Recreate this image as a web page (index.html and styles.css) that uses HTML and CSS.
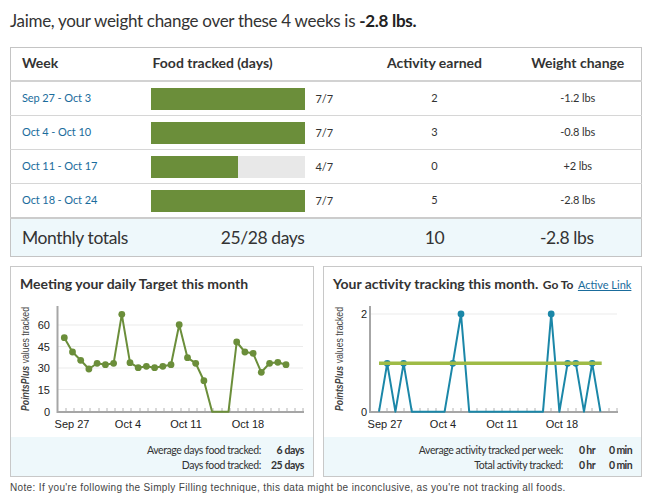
FILE: index.html
```html
<!DOCTYPE html>
<html>
<head>
<meta charset="utf-8">
<link rel="stylesheet" href="styles.css">
</head>
<body>
<div class="page">
  <h1 class="headline">Jaime, your weight change over these 4 weeks is <strong>-2.8 lbs.</strong></h1>

  <table class="weeks">
    <colgroup><col class="w-week"><col class="w-food"><col class="w-act"><col></colgroup>
    <thead>
      <tr><th class="c-week">Week</th><th class="c-food">Food tracked (days)</th><th class="c-act">Activity earned</th><th class="c-wt">Weight change</th></tr>
    </thead>
    <tbody>
      <tr><td class="c-week"><a href="#">Sep 27 - Oct 3</a></td><td class="c-food"><div class="food"><div class="bar"><div class="fill" style="width:100%"></div></div><span>7/7</span></div></td><td class="c-act">2</td><td class="c-wt">-1.2 lbs</td></tr>
      <tr><td class="c-week"><a href="#">Oct 4 - Oct 10</a></td><td class="c-food"><div class="food"><div class="bar"><div class="fill" style="width:100%"></div></div><span>7/7</span></div></td><td class="c-act">3</td><td class="c-wt">-0.8 lbs</td></tr>
      <tr><td class="c-week"><a href="#">Oct 11 - Oct 17</a></td><td class="c-food"><div class="food"><div class="bar"><div class="fill" style="width:57.14%"></div></div><span>4/7</span></div></td><td class="c-act">0</td><td class="c-wt">+2 lbs</td></tr>
      <tr><td class="c-week"><a href="#">Oct 18 - Oct 24</a></td><td class="c-food"><div class="food"><div class="bar"><div class="fill" style="width:100%"></div></div><span>7/7</span></div></td><td class="c-act">5</td><td class="c-wt">-2.8 lbs</td></tr>
    </tbody>
    <tfoot>
      <tr><td class="c-week">Monthly totals</td><td class="c-food"><div class="total-days">25/28 days</div></td><td class="c-act">10</td><td class="c-wt">-2.8 lbs</td></tr>
    </tfoot>
  </table>

  <div class="panels">
    <section class="panel panel-food">
      <h2 class="panel-title">Meeting your daily Target this month</h2>
      <svg class="chart" width="302" height="144" viewBox="0 0 302 144">
        <g class="grid">
          <line x1="47" y1="32" x2="292" y2="32"/>
          <line x1="47" y1="53.5" x2="292" y2="53.5"/>
          <line x1="47" y1="75" x2="292" y2="75"/>
          <line x1="47" y1="96.5" x2="292" y2="96.5"/>
        </g>
        <g class="ticks">
          <path d="M55 115V119M63 115V119M71 115V119M79 115V119M88 115V119M96 115V119M104 115V119M112 115V119M120 115V119M129 115V119M137 115V119M145 115V119M153 115V119M161 115V119M170 115V119M178 115V119M186 115V119M194 115V119M202 115V119M211 115V119M219 115V119M227 115V119M235 115V119M243 115V119M252 115V119M260 115V119M268 115V119M276 115V119M284 115V119M292 115V119"/>
        </g>
        <line class="axis" x1="46.5" y1="13" x2="46.5" y2="120"/>
        <line class="axis" x1="46" y1="119" x2="293" y2="119"/>
        <g class="ylab">
          <text x="39" y="36">60</text>
          <text x="39" y="57.5">45</text>
          <text x="39" y="79">30</text>
          <text x="39" y="100.5">15</text>
          <text x="39" y="123">0</text>
        </g>
        <g class="xlab">
          <text x="61" y="135">Sep 27</text>
          <text x="117" y="135">Oct 4</text>
          <text x="175" y="135">Oct 11</text>
          <text x="237" y="135">Oct 18</text>
        </g>
        <text class="ytitle" transform="translate(18,66) rotate(-90)" textLength="104" lengthAdjust="spacingAndGlyphs"><tspan class="brand">PointsPlus</tspan> values tracked</text>
        <polyline class="line-green" points="53.3,44.7 61.5,59 69.7,67.3 77.9,76 86.1,70.3 94.4,71.7 102.6,70.3 110.8,21.3 119,69.7 127.2,74.7 135.4,73.3 143.6,74.7 151.8,73.3 160,71.7 168.2,31.7 176.5,64.7 184.7,70.3 192.9,87.7 201.1,118.7 209.3,118.7 217.5,118.7 225.7,49 233.9,59 242.1,60.3 250.3,79.3 258.6,70.3 266.8,69.3 275,71.7"/>
        <g class="dots-green">
          <circle cx="53.3" cy="44.7" r="3.4"/><circle cx="61.5" cy="59" r="3.4"/><circle cx="69.7" cy="67.3" r="3.4"/><circle cx="77.9" cy="76" r="3.4"/><circle cx="86.1" cy="70.3" r="3.4"/><circle cx="94.4" cy="71.7" r="3.4"/><circle cx="102.6" cy="70.3" r="3.4"/><circle cx="110.8" cy="21.3" r="3.4"/><circle cx="119" cy="69.7" r="3.4"/><circle cx="127.2" cy="74.7" r="3.4"/><circle cx="135.4" cy="73.3" r="3.4"/><circle cx="143.6" cy="74.7" r="3.4"/><circle cx="151.8" cy="73.3" r="3.4"/><circle cx="160" cy="71.7" r="3.4"/><circle cx="168.2" cy="31.7" r="3.4"/><circle cx="176.5" cy="64.7" r="3.4"/><circle cx="184.7" cy="70.3" r="3.4"/><circle cx="192.9" cy="87.7" r="3.4"/><circle cx="225.7" cy="49" r="3.4"/><circle cx="233.9" cy="59" r="3.4"/><circle cx="242.1" cy="60.3" r="3.4"/><circle cx="250.3" cy="79.3" r="3.4"/><circle cx="258.6" cy="70.3" r="3.4"/><circle cx="266.8" cy="69.3" r="3.4"/><circle cx="275" cy="71.7" r="3.4"/>
        </g>
      </svg>
      <div class="stats stats-food">
        <span class="lbl">Average days food tracked:</span><b>6 days</b>
        <span class="lbl">Days food tracked:</span><b>25 days</b>
      </div>
    </section>

    <section class="panel panel-act">
      <h2 class="panel-title">Your activity tracking this month. <span class="goto">Go To</span> <a href="#" class="active-link">Active Link</a></h2>
      <svg class="chart" width="317" height="144" viewBox="0 0 317 144">
        <g class="grid">
          <line x1="47" y1="21" x2="293" y2="21"/>
        </g>
        <g class="ticks">
          <path d="M55 115V119M63 115V119M71 115V119M80 115V119M88 115V119M96 115V119M104 115V119M112 115V119M121 115V119M129 115V119M137 115V119M145 115V119M153 115V119M162 115V119M170 115V119M178 115V119M186 115V119M194 115V119M203 115V119M211 115V119M219 115V119M227 115V119M235 115V119M244 115V119M252 115V119M260 115V119M268 115V119M276 115V119M285 115V119M293 115V119"/>
        </g>
        <line class="axis" x1="46" y1="13" x2="46" y2="120"/>
        <line class="axis" x1="45.5" y1="119" x2="294" y2="119"/>
        <g class="ylab">
          <text x="43" y="25">2</text>
          <text x="43" y="123">0</text>
        </g>
        <g class="xlab">
          <text x="61" y="135">Sep 27</text>
          <text x="119" y="135">Oct 4</text>
          <text x="178" y="135">Oct 11</text>
          <text x="238" y="135">Oct 18</text>
        </g>
        <text class="ytitle" transform="translate(19,66) rotate(-90)" textLength="104" lengthAdjust="spacingAndGlyphs"><tspan class="brand">PointsPlus</tspan> values tracked</text>
        <polyline class="line-blue" points="55,118.7 63.2,70.3 71.4,118.7 79.6,70.3 87.8,118.7 96,118.7 104.2,118.7 112.4,118.7 120.6,118.7 128.8,70.3 137,21 145.2,118.7 153.4,118.7 161.6,118.7 169.8,118.7 178,118.7 186.2,118.7 194.4,118.7 202.6,118.7 210.8,118.7 219,118.7 227.2,21 235.4,118.7 243.6,70.3 251.8,70.3 260,118.7 268.2,70.3 276.4,118.7"/>
        <g class="dots-blue">
          <circle cx="63.2" cy="70.3" r="3.4"/><circle cx="79.6" cy="70.3" r="3.4"/><circle cx="128.8" cy="70.3" r="3.4"/><circle cx="137" cy="21" r="3.4"/><circle cx="227.2" cy="21" r="3.4"/><circle cx="243.6" cy="70.3" r="3.4"/><circle cx="251.8" cy="70.3" r="3.4"/><circle cx="268.2" cy="70.3" r="3.4"/>
        </g>
        <line class="avg" x1="55" y1="70.3" x2="277.7" y2="70.3"/>
      </svg>
      <div class="stats stats-act">
        <span class="lbl">Average activity tracked per week:</span><b>0 hr</b><b>0 min</b>
        <span class="lbl">Total activity tracked:</span><b>0 hr</b><b>0 min</b>
      </div>
    </section>
  </div>

  <p class="note">Note: If you're following the Simply Filling technique, this data might be inconclusive, as you're not tracking all foods.</p>
</div>
</body>
</html>
```

FILE: styles.css
```css
:root {
  --ui: "Lato", "Open Sans", sans-serif;
  --ink: #333;
  --green: #6b8e3a;
  --blue: #1b87a8;
  --link: #1a6c9c;
  --tint: #eef8fb;
}

* { box-sizing: border-box; }

body {
  margin: 0;
  background: #fff;
  color: var(--ink);
  font-family: var(--ui);
}

.page {
  padding: 8px 8px 0 10px;
}

.headline {
  margin: 0;
  height: 39px;
  font-size: 17px;
  letter-spacing: -0.3px;
  line-height: 26px;
  font-weight: 400;
  color: #333;
}

.headline strong {
  font-weight: 700;
  color: #222;
}

/* weekly table */
.weeks {
  width: 632px;
  border-collapse: collapse;
  table-layout: fixed;
  border: 1px solid #c4c4c4;
}

.w-week { width: 140px; }
.w-food { width: 210px; }
.w-act { width: 148px; }

.weeks th {
  box-sizing: content-box;
  height: 29px;
  padding: 0 0 3px;
  font-size: 14px;
  font-weight: 700;
  color: #333;
  text-align: left;
  border-bottom: 2px solid #d2d2d2;
}

.weeks td {
  box-sizing: content-box;
  height: 31px;
  padding: 0 0 2px;
  font-size: 11px;
  letter-spacing: -0.1px;
  color: #333;
  border-bottom: 1px solid #d6d6d6;
}

.weeks .c-week { padding-left: 11px; }
.weeks th.c-food { padding-left: 2px; }
.weeks .c-act { text-align: center; }
.weeks .c-wt { text-align: center; padding-left: 6px; }

.weeks a {
  color: var(--link);
  text-decoration: none;
}

.food {
  display: flex;
  align-items: center;
  gap: 11px;
  margin-top: 2px;
}

.bar {
  width: 154px;
  height: 22px;
  background: #e8e8e8;
}

.fill {
  height: 100%;
  background: var(--green);
}

.weeks tfoot td {
  height: 36px;
  padding: 0 0 1px;
  font-size: 17.5px;
  letter-spacing: -0.4px;
  background: var(--tint);
  border-top: 2px solid #cccccc;
  border-bottom: 1px solid #c4c4c4;
}

.weeks tfoot .c-week { padding-left: 11px; }
.weeks tfoot .c-wt { padding-left: 0; padding-right: 16px; }

.total-days {
  width: 154px;
  text-align: right;
}

/* chart panels */
.panels {
  display: flex;
  gap: 9px;
  margin-top: 9px;
  width: 632px;
}

.panel {
  border: 1px solid #c8c8c8;
  display: flex;
  flex-direction: column;
}

.panel-food { width: 304px; }
.panel-act { width: 319px; }

.panel-title {
  margin: 0;
  padding: 8px 0 0 9px;
  height: 26px;
  font-size: 14px;
  line-height: 18px;
  font-weight: 700;
  color: #333;
  white-space: nowrap;
}

.goto {
  font-size: 12px;
  font-weight: 700;
  margin-left: 1px;
}

.active-link {
  margin-left: 1px;
  font-size: 11px;
  font-weight: 400;
  color: var(--link);
  text-decoration: underline;
}

.chart {
  display: block;
}

.grid line { stroke: #ebebeb; stroke-width: 1; }
.ticks path { stroke: #b4b4b4; stroke-width: 1; fill: none; }
.axis { stroke: #a6a6a6; stroke-width: 2; }

.ylab text {
  font-family: "Liberation Sans", Arial, sans-serif;
  font-size: 11px;
  fill: #222;
  text-anchor: end;
}

.xlab text {
  font-family: "Liberation Sans", Arial, sans-serif;
  font-size: 11px;
  fill: #222;
  text-anchor: middle;
}

.ytitle {
  font-family: "Liberation Sans", Arial, sans-serif;
  font-size: 10px;
  fill: #444;
  text-anchor: middle;
}

.ytitle .brand {
  font-weight: 700;
  font-style: italic;
}

.line-green { fill: none; stroke: var(--green); stroke-width: 2; stroke-linejoin: round; }
.dots-green circle { fill: var(--green); }
.line-blue { fill: none; stroke: var(--blue); stroke-width: 2; stroke-linejoin: round; }
.dots-blue circle { fill: var(--blue); }
.avg { stroke: #9fbb46; stroke-width: 3.5; }

.stats {
  background: var(--tint);
  padding: 6px 9px 3px 0;
  display: grid;
  justify-content: end;
  align-items: center;
  font-size: 10.5px;
  letter-spacing: -0.4px;
  line-height: 15px;
  color: #333;
}

.stats-food {
  grid-template-columns: auto auto;
  column-gap: 10px;
}

.stats-act {
  grid-template-columns: auto auto auto;
  column-gap: 14px;
}

.stats-act .lbl { margin-right: 2px; }
.stats-act b { letter-spacing: -0.6px; }

.stats .lbl { text-align: right; }
.stats b { text-align: right; font-weight: 700; }

.note {
  margin: 5px 0 0;
  font-family: "Liberation Sans", Arial, sans-serif;
  font-size: 10px;
  letter-spacing: 0.35px;
  color: #444;
}
```
